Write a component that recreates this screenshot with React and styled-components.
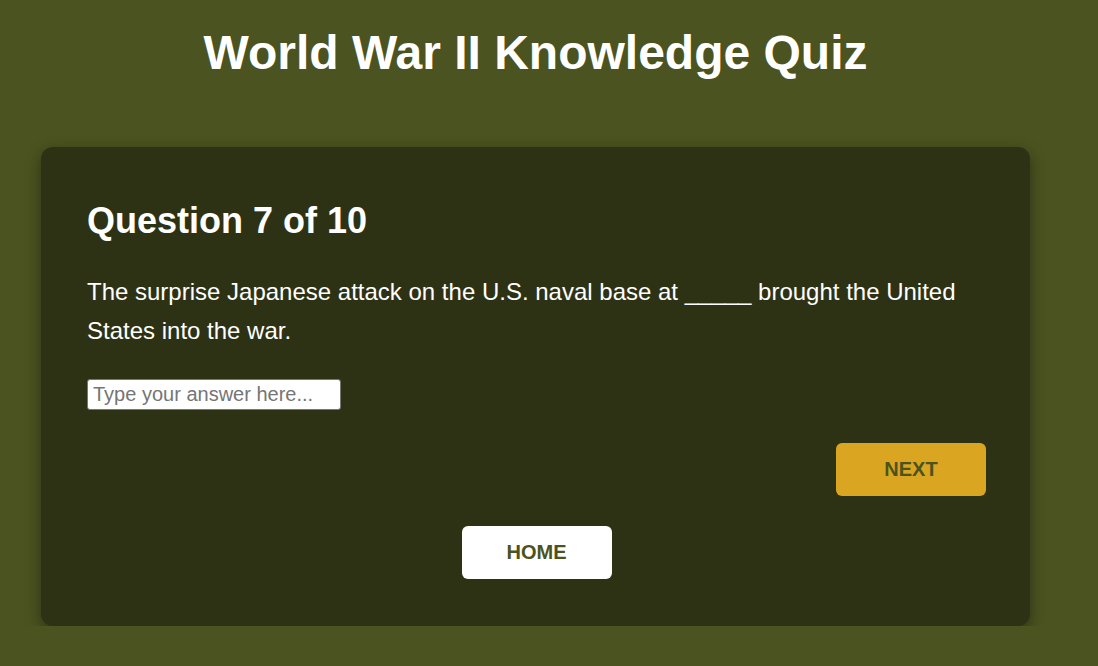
import React, { useState } from 'react'
import styled, { createGlobalStyle } from 'styled-components'

const GlobalStyle = createGlobalStyle`
	html, body {
		margin: 0;
		padding: 0;
		background: #4b5320;
		font-family: "Liberation Sans", Arial, sans-serif;
	}
`

const Page = styled.div`
	width: 989px;
	margin-left: 41px;
	padding-top: 25px;
	color: #ffffff;
`

const Title = styled.h1`
	margin: 0 0 67px;
	font-size: 48px;
	font-weight: bold;
	text-align: center;
	line-height: normal;
`

const Card = styled.div`
	background: #2e3214;
	border-radius: 12px;
	box-shadow: 0 5px 15px rgba(0, 0, 0, 0.4);
	padding: 53px 44px 47px 46px;
	display: flex;
	flex-direction: column;
`

const Question = styled.h2`
	margin: 0;
	font-size: 36px;
	font-weight: bold;
	line-height: normal;
`

const Prompt = styled.p`
	margin: 30px 0 29px;
	font-size: 24px;
	line-height: 39px;
	padding-right: 20px;
`

const AnswerInput = styled.input`
	width: 254px;
	height: 31px;
	box-sizing: border-box;
	padding: 2px 5px;
	font-family: "Liberation Sans", Arial, sans-serif;
	font-size: 20px;
	border: 1px solid #767676;
	border-radius: 3px;
	background: #ffffff;
	color: #000;

	&::placeholder {
		color: #757575;
	}
`

const Actions = styled.div`
	display: flex;
	justify-content: ${p => p.$align};
	margin-top: ${p => p.$gap}px;
`

const Button = styled.button`
	width: 150px;
	height: 53px;
	border: none;
	border-radius: 6px;
	font-family: "Liberation Sans", Arial, sans-serif;
	font-size: 20px;
	font-weight: bold;
	color: #4b5320;
	background: ${p => p.$bg};
	cursor: pointer;
`

export default function App() {
	const [answer, setAnswer] = useState('')

	return (
		<>
			<GlobalStyle />
			<Page>
				<Title>World War II Knowledge Quiz</Title>
				<Card>
					<Question>Question 7 of 10</Question>
					<Prompt>
						The surprise Japanese attack on the U.S. naval base at _____ brought the United States into the war.
					</Prompt>
					<div>
						<AnswerInput
							type="text"
							placeholder="Type your answer here..."
							value={answer}
							onChange={e => setAnswer(e.target.value)}
						/>
					</div>
					<Actions $align="flex-end" $gap={33}>
						<Button $bg="#daa520">NEXT</Button>
					</Actions>
					<Actions $align="center" $gap={30}>
						<Button $bg="#ffffff">HOME</Button>
					</Actions>
				</Card>
			</Page>
		</>
	)
}
